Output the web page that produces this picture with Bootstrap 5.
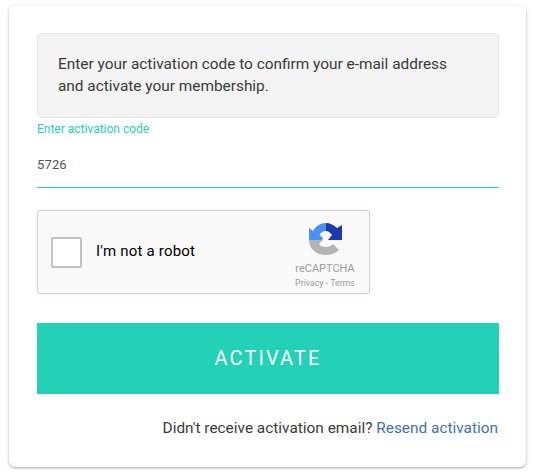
<!DOCTYPE html>
<html lang="en">
<head>
<meta charset="utf-8">
<title>Activate</title>
<link href="https://cdn.jsdelivr.net/npm/bootstrap@5.3.0/dist/css/bootstrap.min.css" rel="stylesheet">
<style>
html,body{height:100%;background:#fff;font-family:Roboto,"Liberation Sans",sans-serif;}
body{padding:5px 7px 7px 9px;overflow:hidden;}
.panel{height:462px;padding:28px 27px 0 28px;border-radius:6px;box-shadow:0 1px 3px rgba(0,0,0,.35);background:#fff;}
.info-box{height:85px;padding:20px 40px 0 20px;background:#f3f3f3;border:1px solid #e6e6e6;border-radius:5px;font-size:15.4px;line-height:21.6px;color:#3a3a3a;}
.code-label{display:block;font-size:12px;line-height:14px;margin:4px 0 0;color:#22d1b6;}
.code-input{display:block;width:100%;height:52px;padding:6px 0 0;border:0;border-bottom:1px solid #22d1b6;border-radius:0;font:13px Roboto,sans-serif;letter-spacing:.15px;color:#555;background:transparent;}
.code-input:focus{outline:0;}
.captcha{width:333px;height:84px;margin-top:22px;padding:0 13px;background:#f9f9f9;border:1px solid #d3d3d3;border-radius:3px;box-shadow:0 0 4px rgba(0,0,0,.08);}
.tick{width:31px;height:31px;background:#fff;border:2px solid #c1c1c1;border-radius:2px;}
.robot{margin-left:14px;padding-bottom:2px;font-size:15px;letter-spacing:.2px;color:#000;}
.brand{width:72px;margin-right:-5px;color:#9b9b9b;text-align:center;padding-top:8px;}
.brand svg{display:block;margin:0 0 5px 20px;}
.brand-name{font-size:11px;line-height:14px;}
.brand-links{font-size:8.8px;line-height:14px;}
.go{display:block;width:100%;height:71px;margin-top:29px;padding-bottom:8px;border:0;border-radius:0;background:#22d1b6;color:#fff;font-size:20px;letter-spacing:2.1px;}
.go:hover{background:#22d1b6;color:#fff;}
.resend{margin-top:24px;padding-right:1px;font-size:15.4px;line-height:20px;color:#3a3a3a;text-align:right;}
.resend a{color:#3f6fb5;text-decoration:none;}
</style>
</head>
<body>
<main class="panel">
  <div class="info-box">Enter your activation code to confirm your e-mail address and activate your membership.</div>
  <form>
    <label class="code-label" for="code">Enter activation code</label>
    <input class="code-input" id="code" type="text" value="5726">
    <div class="captcha d-flex align-items-center">
      <div class="tick flex-shrink-0"></div>
      <div class="robot flex-grow-1">I'm not a robot</div>
      <div class="brand flex-shrink-0">
        <svg width="34" height="34" viewBox="0 0 34 34" aria-hidden="true">
          <path fill="#4a90f5" d="M0 17V5l4 3C7 3 11 0 17 0v8c-3 0-5 1-6.500 4l3.500 3-1 2z"/>
          <path fill="#1c3aa9" d="M17 0c4 0 8 2 11 5l5-3v15H19l4-5c-1.500-2-3.500-4-6-4z"/>
          <path fill="#b4b4b4" d="M0 17h14l-4 4c1 2 4 3 7 3 3 0 5-1 7-3l6 6c-3 3-8 5-13 5C8 32 0 26 0 17z"/>
        </svg>
        <div class="brand-name">reCAPTCHA</div>
        <div class="brand-links">Privacy - Terms</div>
      </div>
    </div>
    <button class="btn go" type="button">ACTIVATE</button>
  </form>
  <p class="resend">Didn't receive activation email? <a href="#">Resend activation</a></p>
</main>
</body>
</html>
